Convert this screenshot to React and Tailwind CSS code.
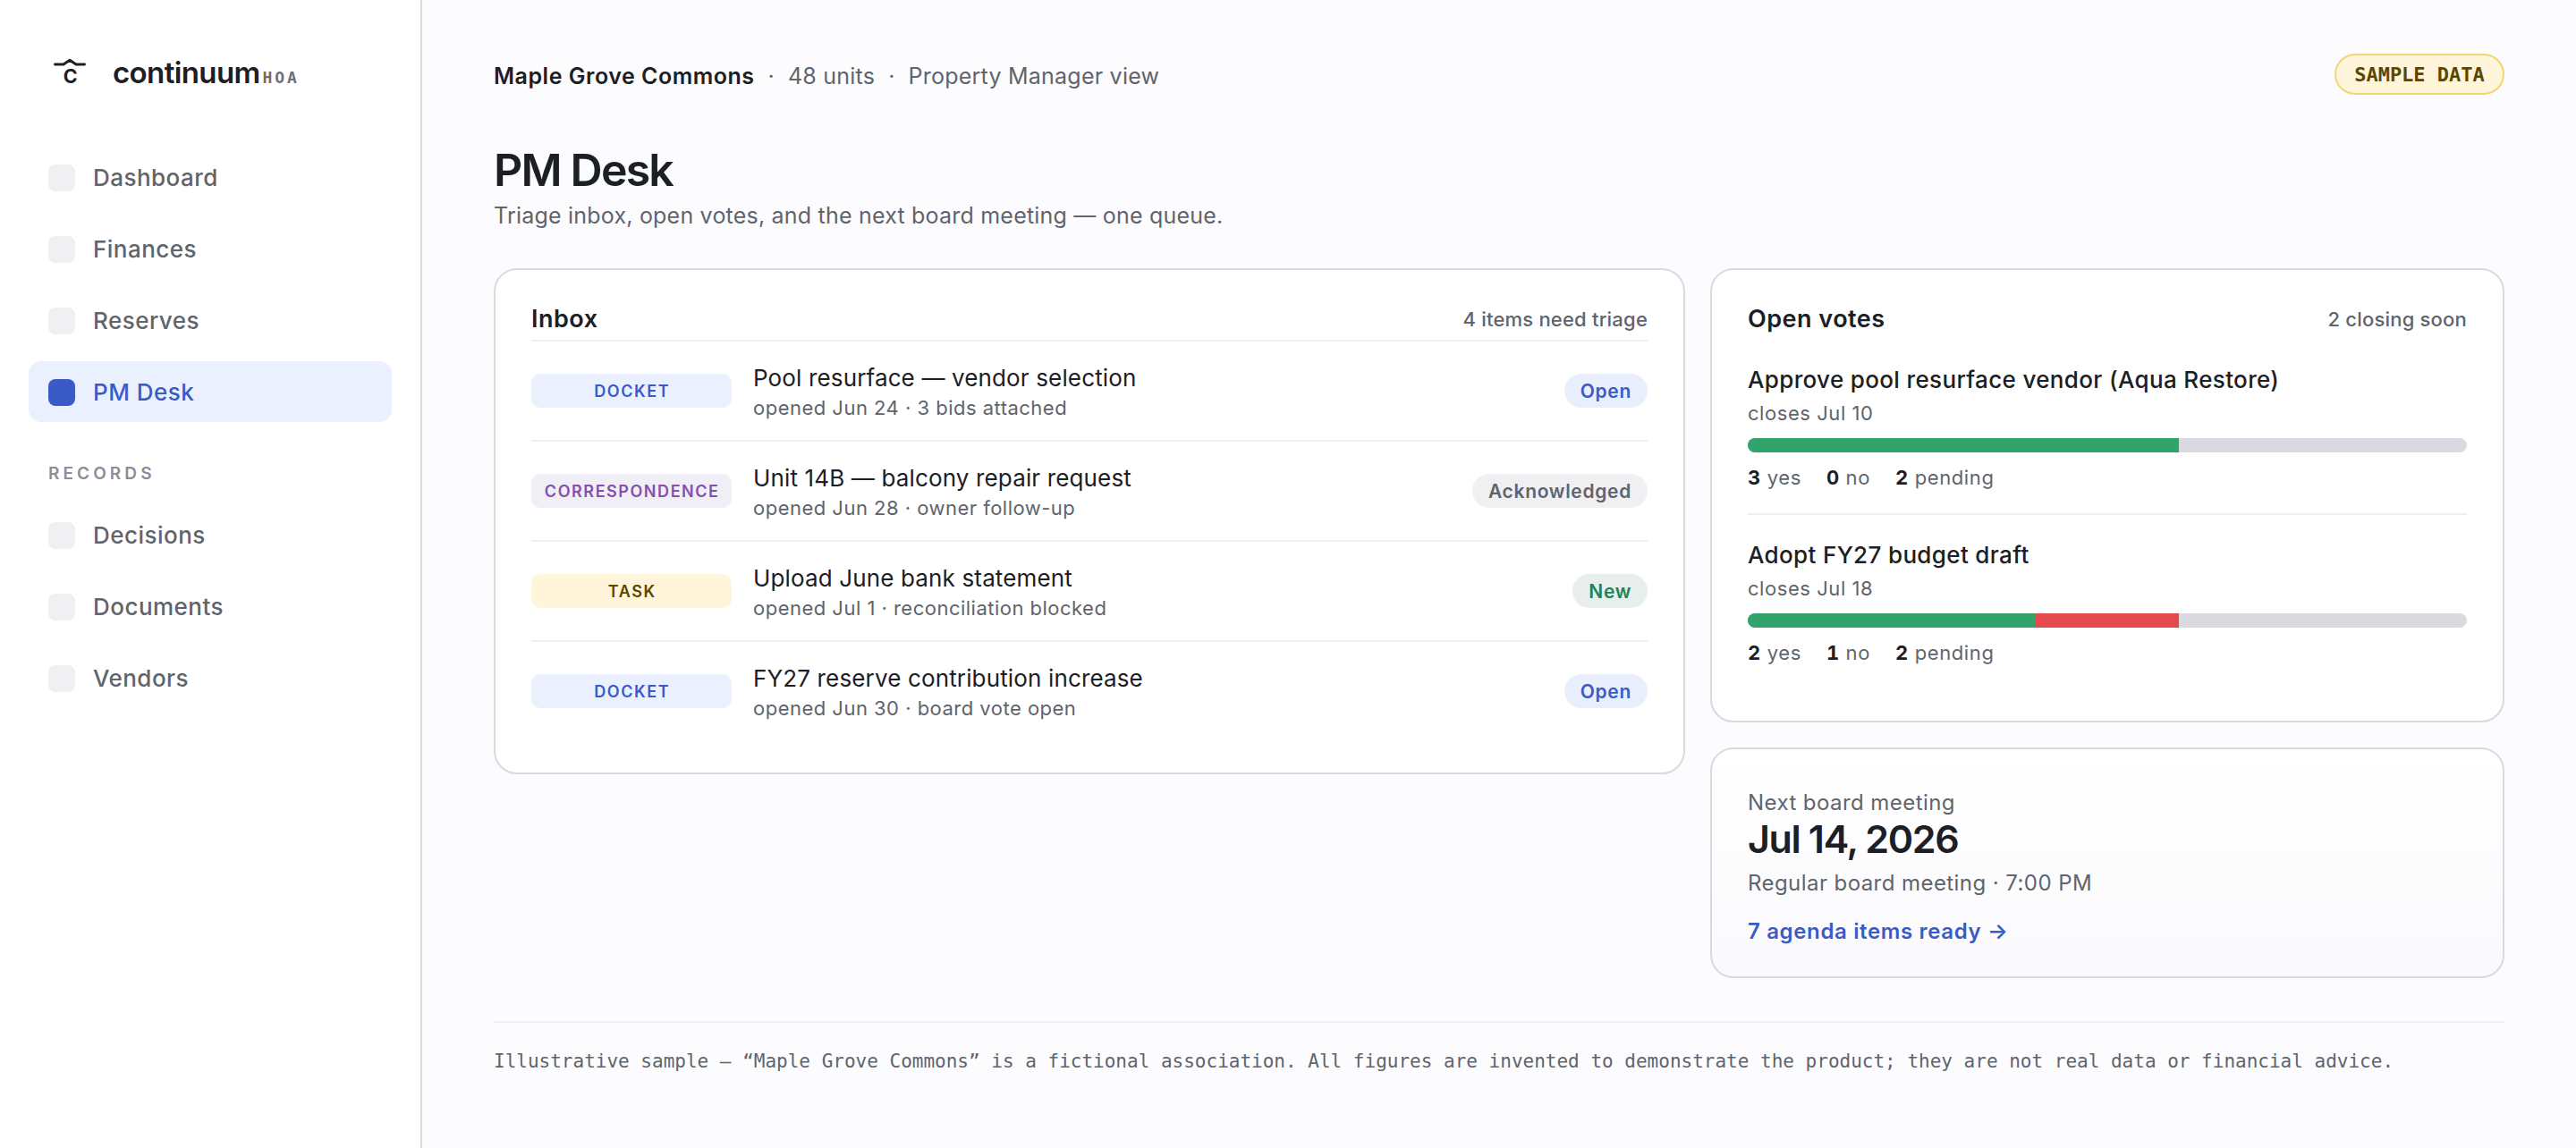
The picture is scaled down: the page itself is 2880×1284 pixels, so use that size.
import React from "react";

const mainNav = ["Dashboard", "Finances", "Reserves", "PM Desk"];
const recordsNav = ["Decisions", "Documents", "Vendors"];

const inbox = [
  { kind: "DOCKET", kindClass: "bg-[#ebf0fe] text-[#3a5bc7]", title: "Pool resurface — vendor selection", meta: "opened Jun 24 · 3 bids attached", status: "Open", statusClass: "bg-[#e8eefc] text-[#3a5bc7]" },
  { kind: "CORRESPONDENCE", kindClass: "bg-[#f0eff5] text-[#8550ae]", title: "Unit 14B — balcony repair request", meta: "opened Jun 28 · owner follow-up", status: "Acknowledged", statusClass: "bg-[#f0f0f3] text-[#60646c]" },
  { kind: "TASK", kindClass: "bg-[#fff5da] text-[#5c4700]", title: "Upload June bank statement", meta: "opened Jul 1 · reconciliation blocked", status: "New", statusClass: "bg-[#e7eeeb] text-[#1f8352]" },
  { kind: "DOCKET", kindClass: "bg-[#ebf0fe] text-[#3a5bc7]", title: "FY27 reserve contribution increase", meta: "opened Jun 30 · board vote open", status: "Open", statusClass: "bg-[#e8eefc] text-[#3a5bc7]" },
];

const votes = [
  { title: "Approve pool resurface vendor (Aqua Restore)", closes: "closes Jul 10", yes: 3, no: 0, pending: 2 },
  { title: "Adopt FY27 budget draft", closes: "closes Jul 18", yes: 2, no: 1, pending: 2 },
];

function NavItem({ label, active }) {
  return (
    <a className={`flex h-[68px] items-center gap-5 rounded-[14px] pt-0.5 pl-[22px] ${active ? "bg-[#ebf0fe] text-[#3a5bc7]" : "text-[#60646c]"}`}>
      <span className={`size-[30px] rounded-lg ${active ? "bg-[#3a5bc7]" : "bg-[#f0f0f3]"}`} />
      <span className="text-[26px] font-medium leading-[34px] tracking-[0.018em]">{label}</span>
    </a>
  );
}

function Sidebar() {
  return (
    <aside className="w-[472px] shrink-0 border-r-2 border-[#d9d9e0] bg-white px-8 pt-[54px]">
      <div className="flex h-[54px] items-center pl-[22px]">
        <svg width="48" height="48" viewBox="0 0 48 48" className="text-[#1c2024]">
          <path d="M7.5 15h9.5l7-4.8L31 15h9.5" fill="none" stroke="currentColor" strokeWidth="2.9" strokeLinecap="round" strokeLinejoin="round" />
          <text x="24.8" y="36.3" textAnchor="middle" className="fill-current text-[21.5px] font-bold">C</text>
        </svg>
        <div className="ml-6 flex items-baseline">
          <span className="text-[33px] font-semibold leading-[54px] tracking-[-0.0186em] text-[#1c2024]">continuum</span>
          <span className="ml-[3px] font-['DejaVu_Sans_Mono',monospace] text-[18px] font-bold tracking-[0.16em] text-[#6c7078]">HOA</span>
        </div>
      </div>
      <nav className="mt-14 flex flex-col gap-3">
        {mainNav.map((n) => <NavItem key={n} label={n} active={n === "PM Desk"} />)}
      </nav>
      <div className="mt-[46px] mb-[22px] pl-[22px] text-[19px] font-semibold leading-6 tracking-[0.215em] text-[#8b8d98]">RECORDS</div>
      <nav className="flex flex-col gap-3">
        {recordsNav.map((n) => <NavItem key={n} label={n} />)}
      </nav>
    </aside>
  );
}

function CardHeader({ title, note }) {
  return (
    <div className="flex h-[38px] items-center justify-between pt-0.5">
      <h2 className="text-[27px] font-semibold tracking-[0.018em] text-[#1c2024]">{title}</h2>
      <span className="text-[22px] font-medium tracking-[0.009em] text-[#60646c]">{note}</span>
    </div>
  );
}

function InboxRow({ item }) {
  return (
    <div className="flex h-28 items-center border-t-2 border-[#f0f0f3]">
      <span className={`flex h-[38px] w-56 items-center justify-center rounded-[10px] pt-px pl-[0.08em] text-[18px] font-semibold tracking-[0.086em] ${item.kindClass}`}>{item.kind}</span>
      <div className="ml-6 flex-1 pt-0.5">
        <div className="text-[26px] leading-[36px] tracking-[0.0056em] text-[#1c2024]">{item.title}</div>
        <div className="text-[22px] leading-[31px] tracking-[0.022em] text-[#60646c]">{item.meta}</div>
      </div>
      <span className={`flex h-[38px] items-center rounded-full px-[18px] pt-px text-[21px] font-semibold tracking-[0.033em] ${item.statusClass}`}>{item.status}</span>
    </div>
  );
}

function Count({ n, label }) {
  return (
    <span>
      <b className="font-bold tabular-nums text-[#1c2024]">{n}</b> {label}
    </span>
  );
}

function Vote({ vote, divided }) {
  const total = vote.yes + vote.no + vote.pending;
  return (
    <div className={`h-[196px] pt-[27px] ${divided ? "border-b-2 border-[#f0f0f3]" : ""}`}>
      <div className="text-[26px] font-medium leading-9 tracking-[0.0135em] text-[#1c2024]">{vote.title}</div>
      <div className="mt-[3px] text-[22px] leading-8 tracking-[0.0252em] text-[#60646c]">{vote.closes}</div>
      <div className="mt-3 flex h-4 overflow-hidden rounded-full bg-[#d9d9e0]">
        <span className="bg-[#30a46c]" style={{ width: `${(vote.yes / total) * 100}%` }} />
        <span className="bg-[#e5484d]" style={{ width: `${(vote.no / total) * 100}%` }} />
      </div>
      <div className="mt-3 flex gap-7 text-[22px] leading-8 tracking-[0.028em] text-[#60646c]">
        <Count n={vote.yes} label="yes" />
        <Count n={vote.no} label="no" />
        <Count n={vote.pending} label="pending" />
      </div>
    </div>
  );
}

export default function App() {
  return (
    <div className="flex h-[1284px] w-[2880px] overflow-hidden bg-[#fcfcfe] font-[Inter,sans-serif]">
      <Sidebar />
      <main className="flex-1 px-20 pt-[60px]">
        <header className="flex h-[46px] items-center justify-between">
          <div className="flex gap-[15px] pt-[5px] text-[25px] tracking-[0.009em] text-[#60646c]">
            <span className="font-semibold tracking-[0.0207em] text-[#1c2024]">Maple Grove Commons</span>
            <span>·</span>
            <span>48 units</span>
            <span>·</span>
            <span>Property Manager view</span>
          </div>
          <span className="flex h-[46px] w-[190px] items-center justify-center rounded-full border-2 border-[#f3d673] bg-[#fff5da] font-['DejaVu_Sans_Mono',monospace] text-[22px] font-bold text-[#5c4700]">SAMPLE DATA</span>
        </header>

        <h1 className="mt-[54px] text-[50px] font-semibold leading-[60px] tracking-[-0.036em] text-[#1c2024]">PM Desk</h1>
        <p className="mt-[3px] text-[25px] leading-9 tracking-[0.0083em] text-[#60646c]">Triage inbox, open votes, and the next board meeting — one queue.</p>

        <div className="mt-[41px] grid grid-cols-[3fr_2fr] items-start gap-7">
          <section className="h-[566px] rounded-[26px] border-2 border-[#d9d9e0] bg-white px-10 pt-[35px]">
            <CardHeader title="Inbox" note="4 items need triage" />
            <div className="mt-[5px]">
              {inbox.map((item) => <InboxRow key={item.title} item={item} />)}
            </div>
          </section>

          <div className="flex flex-col gap-7">
            <section className="h-[508px] rounded-[26px] border-2 border-[#d9d9e0] bg-white px-10 pt-[35px]">
              <CardHeader title="Open votes" note="2 closing soon" />
              <div className="mt-[5px]">
                {votes.map((v, i) => <Vote key={v.title} vote={v} divided={i === 0} />)}
              </div>
            </section>

            <section className="h-[258px] rounded-[26px] border-2 border-[#d9d9e0] bg-linear-to-b from-white to-[#fafafd] px-10 pt-11 text-[24px] text-[#60646c]">
              <div className="leading-8 tracking-[0.018em]">Next board meeting</div>
              <div className="-mt-px text-[43px] font-semibold leading-[50px] tracking-[-0.032em] text-[#1c2024]">Jul 14, 2026</div>
              <div className="mt-[9px] leading-8 tracking-[0.018em]">Regular board meeting · 7:00 PM</div>
              <a className="mt-[22px] block font-semibold leading-8 tracking-[0.027em] text-[#3a5bc7]">7 agenda items ready →</a>
            </section>
          </div>
        </div>

        <footer className="mt-12 border-t-2 border-[#f0f0f3] pt-[27px] font-['DejaVu_Sans_Mono',monospace] text-[21px] leading-8 text-[#60646c]">
          Illustrative sample — “Maple Grove Commons” is a fictional association. All figures are invented to demonstrate the product; they are not real data or financial advice.
        </footer>
      </main>
    </div>
  );
}
